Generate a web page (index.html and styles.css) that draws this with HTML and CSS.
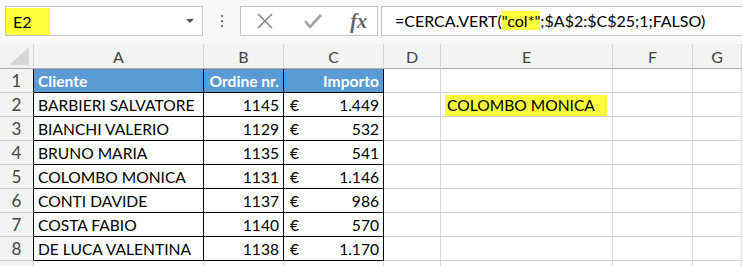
FILE: index.html
```html
<!DOCTYPE html>
<html lang="it">
<head>
  <meta charset="UTF-8">
  <title>CERCA.VERT</title>
  <link rel="stylesheet" href="styles.css">
</head>
<body>
  <div class="formula-bar">
    <div class="name-box">
      <span class="mark">E2</span>
      <svg class="drop" width="8" height="5" viewBox="0 0 8 5"><path d="M0 0h8L4 4z" fill="#555"/></svg>
    </div>
    <div class="dots"><i></i><i></i><i></i></div>
    <div class="fx-box">
      <svg width="20" height="20" viewBox="0 0 20 20"><path d="M3 3l14 14M17 3L3 17" stroke="#8a8a8a" stroke-width="1.6" fill="none"/></svg>
      <svg width="20" height="20" viewBox="0 0 20 20"><path d="M2 10l5 6L18 4" stroke="#a5a5a5" stroke-width="2.6" fill="none"/></svg>
      <span class="fx">fx</span>
    </div>
    <div class="formula">=CERCA.VERT(<span class="mark">"col*"</span>;$A$2:$C$25;1;FALSO)</div>
  </div>

  <div class="sheet">
    <div class="corner"><svg width="20" height="18" viewBox="0 0 20 18"><path d="M20 0V18H0z" fill="#d6d6d6"/></svg></div>
    <div class="col-head">A</div>
    <div class="col-head">B</div>
    <div class="col-head">C</div>
    <div class="col-head">D</div>
    <div class="col-head">E</div>
    <div class="col-head">F</div>
    <div class="col-head">G</div>

    <div class="row-head tb">1</div>
    <div class="cell th">Cliente</div>
    <div class="cell th num">Ordine nr.</div>
    <div class="cell th num">Importo</div>
    <div class="cell"></div><div class="cell"></div><div class="cell"></div><div class="cell"></div>

    <div class="row-head tb">2</div>
    <div class="cell td">BARBIERI SALVATORE</div>
    <div class="cell td num">1145</div>
    <div class="cell td money"><span>€</span><span>1.449</span></div>
    <div class="cell"></div><div class="cell"><span class="mark result">COLOMBO MONICA</span></div><div class="cell"></div><div class="cell"></div>

    <div class="row-head tb">3</div>
    <div class="cell td">BIANCHI VALERIO</div>
    <div class="cell td num">1129</div>
    <div class="cell td money"><span>€</span><span>532</span></div>
    <div class="cell"></div><div class="cell"></div><div class="cell"></div><div class="cell"></div>

    <div class="row-head tb">4</div>
    <div class="cell td">BRUNO MARIA</div>
    <div class="cell td num">1135</div>
    <div class="cell td money"><span>€</span><span>541</span></div>
    <div class="cell"></div><div class="cell"></div><div class="cell"></div><div class="cell"></div>

    <div class="row-head tb">5</div>
    <div class="cell td">COLOMBO MONICA</div>
    <div class="cell td num">1131</div>
    <div class="cell td money"><span>€</span><span>1.146</span></div>
    <div class="cell"></div><div class="cell"></div><div class="cell"></div><div class="cell"></div>

    <div class="row-head tb">6</div>
    <div class="cell td">CONTI DAVIDE</div>
    <div class="cell td num">1137</div>
    <div class="cell td money"><span>€</span><span>986</span></div>
    <div class="cell"></div><div class="cell"></div><div class="cell"></div><div class="cell"></div>

    <div class="row-head tb">7</div>
    <div class="cell td">COSTA FABIO</div>
    <div class="cell td num">1140</div>
    <div class="cell td money"><span>€</span><span>570</span></div>
    <div class="cell"></div><div class="cell"></div><div class="cell"></div><div class="cell"></div>

    <div class="row-head tb">8</div>
    <div class="cell td">DE LUCA VALENTINA</div>
    <div class="cell td num">1138</div>
    <div class="cell td money"><span>€</span><span>1.170</span></div>
    <div class="cell"></div><div class="cell"></div><div class="cell"></div><div class="cell"></div>

    <div class="row-head"></div>
    <div class="cell"></div><div class="cell"></div><div class="cell"></div>
    <div class="cell"></div><div class="cell"></div><div class="cell"></div><div class="cell"></div>
  </div>
</body>
</html>
```

FILE: styles.css
```css
body {
  margin: 0;
  width: 742px;
  height: 266px;
  overflow: hidden;
  background: #fff;
  font-family: Lato, 'Liberation Sans', sans-serif;
  color: #000;
}
.mark {
  background: #ffff3c;
}
.formula-bar {
  height: 44px;
  background: #f8f8f8;
  display: flex;
  align-items: flex-start;
  padding-top: 6px;
  box-sizing: border-box;
}
.name-box {
  margin-left: 5px;
  width: 198px;
  height: 30px;
  box-sizing: border-box;
  background: #fff;
  border: 1px solid #c6c6c6;
  display: flex;
  align-items: center;
  justify-content: space-between;
  padding: 0 8px 0 0;
  font-size: 16px;
}
.name-box .mark {
  padding: 4px 18px 4px 7px;
  margin-top: 1px;
}
.dots {
  width: 37px;
  height: 30px;
  display: flex;
  flex-direction: column;
  align-items: center;
  justify-content: center;
  gap: 3px;
}
.dots i {
  width: 2px;
  height: 2px;
  background: #777;
}
.fx-box {
  width: 138px;
  height: 30px;
  box-sizing: border-box;
  background: #fff;
  border: 1px solid #c6c6c6;
  display: flex;
  align-items: center;
  justify-content: space-between;
  padding: 0 10px 0 14px;
}
.fx {
  font-family: 'Liberation Serif', serif;
  font-style: italic;
  font-weight: bold;
  font-size: 20px;
  color: #666;
}
.formula {
  margin-left: 3px;
  flex: 1;
  height: 30px;
  box-sizing: border-box;
  background: #fff;
  border: 1px solid #c6c6c6;
  border-right: none;
  padding-left: 13px;
  font-size: 16px;
  line-height: 28px;
  white-space: nowrap;
}
.sheet {
  display: grid;
  grid-template-columns: 34px 170px 80px 100px 57px 172px 80px 1fr;
  grid-template-rows: 25px repeat(9, 24px);
  font-size: 15.6px;
}
.corner,
.col-head,
.row-head {
  background: #f3f3f3;
  color: #444;
  box-sizing: border-box;
}
.corner {
  border-right: 1px solid #d4d4d4;
  border-bottom: 1px solid #ababab;
  display: flex;
  align-items: flex-end;
  justify-content: flex-end;
  padding: 0 4px 3px 0;
}
.col-head {
  border-right: 1px solid #d4d4d4;
  border-bottom: 1px solid #ababab;
  text-align: center;
  line-height: 25px;
  font-size: 16px;
}
.row-head {
  border-right: 1px solid #c6c6c6;
  border-bottom: 1px solid #d4d4d4;
  text-align: center;
  line-height: 24px;
  font-size: 17px;
}
.row-head.tb {
  border-right-color: #000;
}
.cell {
  box-sizing: border-box;
  border-right: 1px solid #d4d4d4;
  border-bottom: 1px solid #d4d4d4;
  line-height: 24px;
  padding: 0 4px;
  white-space: nowrap;
}
.td,
.th {
  border-right-color: #000;
  border-bottom-color: #000;
}
.th {
  background: #5b9bd5;
  color: #fff;
  font-weight: bold;
}
.num {
  text-align: right;
}
.money {
  display: flex;
  justify-content: space-between;
  padding-left: 6px;
}
.result {
  display: inline-block;
  margin-top: 1px;
  padding: 0 12px 0 2px;
  line-height: 21px;
}
```
